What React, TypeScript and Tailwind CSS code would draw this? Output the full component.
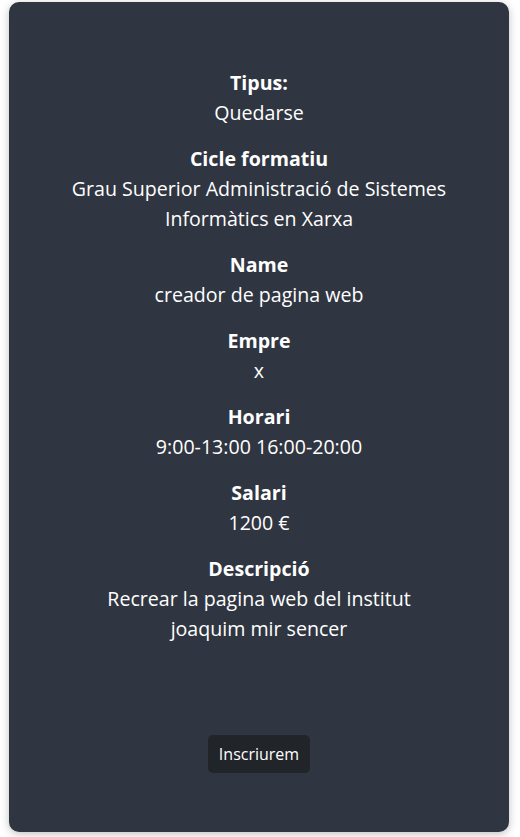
import React from "react";

const items: { label: string; value: string }[] = [
  { label: "Tipus:", value: "Quedarse" },
  { label: "Cicle formatiu", value: "Grau Superior Administració de Sistemes Informàtics en Xarxa" },
  { label: "Name", value: "creador de pagina web" },
  { label: "Empre", value: "x" },
  { label: "Horari", value: "9:00-13:00 16:00-20:00" },
  { label: "Salari", value: "1200 €" },
  { label: "Descripció", value: "Recrear la pagina web del institut joaquim mir sencer" },
];

export default function App() {
  return (
    <div className="bg-white w-[520px] h-[837px] pt-[2px] px-[9px]" style={{ fontFamily: '"Open Sans", sans-serif' }}>
      <div className="h-[830px] w-[500px] rounded-[10px] bg-[#303641] shadow-[0_2px_8px_rgba(0,0,0,0.25)] flex flex-col items-center pt-[66px] pb-[59px] text-white">
        <div className="flex flex-col items-center gap-4 w-[380px] text-center">
          {items.map((it) => (
            <div key={it.label} className="flex flex-col items-center">
              <div className="text-[19.6px] leading-[30px] font-bold">{it.label}</div>
              <div className="text-[19.6px] leading-[30px]">{it.value}</div>
            </div>
          ))}
        </div>
        <button className="mt-auto h-[38px] w-[102px] rounded-[5px] bg-[#212529] text-[16px] text-white">
          Inscriurem
        </button>
      </div>
    </div>
  );
}
